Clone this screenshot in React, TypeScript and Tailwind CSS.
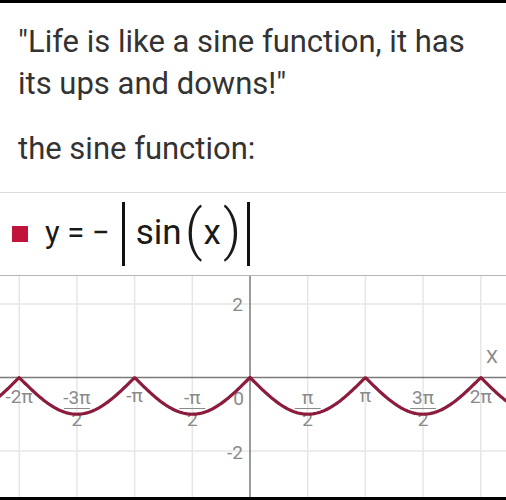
import React from "react";

const FONT = { fontFamily: "Roboto, 'Noto Sans', sans-serif" };

// graph geometry: 1 unit = UNIT px, origin at (OX, OY) inside the svg
const UNIT = 36.73;
const OX = 250;
const OY = 101.5;
const W = 506;
const H = 221;

function curvePath() {
  const pts: string[] = [];
  for (let px = -2; px <= W + 2; px += 1) {
    const x = (px - OX) / UNIT;
    const y = OY + Math.abs(Math.sin(x)) * UNIT;
    pts.push(`${px === -2 ? "M" : "L"}${px.toFixed(1)},${y.toFixed(2)}`);
  }
  return pts.join(" ");
}

function Fraction({ x, num }: { x: number; num: string }) {
  return (
    <g fill="#8a8a8a" fontSize="19" textAnchor="middle">
      <text x={x} y={OY + 26}>{num}</text>
      <line x1={x - 13} x2={x + 13} y1={OY + 31} y2={OY + 31} stroke="#8a8a8a" strokeWidth="1" />
      <text x={x} y={OY + 48}>2</text>
    </g>
  );
}

function Graph() {
  const step = (Math.PI / 2) * UNIT;
  const vlines = [-4, -3, -2, -1, 1, 2, 3, 4].map((k) => OX + k * step);
  const hlines = [OY - 2 * UNIT, OY + 2 * UNIT];
  return (
    <svg width={W} height={H} viewBox={`0 0 ${W} ${H}`} className="block" style={FONT}>
      {vlines.map((x) => (
        <line key={x} x1={x} x2={x} y1={0} y2={H} stroke="#e6e6e6" strokeWidth="1.5" />
      ))}
      {hlines.map((y) => (
        <line key={y} x1={0} x2={W} y1={y} y2={y} stroke="#e6e6e6" strokeWidth="1.5" />
      ))}
      <line x1={0} x2={W} y1={OY} y2={OY} stroke="#7a7a7a" strokeWidth="1.5" />
      <line x1={OX} x2={OX} y1={0} y2={H} stroke="#7a7a7a" strokeWidth="1.5" />

      <g fill="#8a8a8a" fontSize="19">
        <text x={OX - 7} y={OY - 2 * UNIT + 7} textAnchor="end">2</text>
        <text x={OX - 7} y={OY + 2 * UNIT + 8} textAnchor="end">-2</text>
        <text x={498} y={OY - 15} textAnchor="end">X</text>
        <text x={OX - 6} y={OY + 27} textAnchor="end">0</text>
        <text x={OX - 4 * step} y={OY + 25} textAnchor="middle">-2π</text>
        <text x={OX - 2 * step} y={OY + 24} textAnchor="middle">-π</text>
        <text x={OX + 2 * step} y={OY + 24} textAnchor="middle">π</text>
        <text x={OX + 4 * step} y={OY + 25} textAnchor="middle">2π</text>
      </g>
      <Fraction x={OX - 3 * step} num="-3π" />
      <Fraction x={OX - step} num="-π" />
      <Fraction x={OX + step} num="π" />
      <Fraction x={OX + 3 * step} num="3π" />

      <path d={curvePath()} fill="none" stroke="#8c1c3c" strokeWidth="3.2" strokeLinejoin="round" />
    </svg>
  );
}

function Equation() {
  return (
    <div className="flex h-[84px] items-center border-t border-b border-t-[#dcdcdc] border-b-[#b5b5b5] pl-3" style={FONT}>
      <div className="h-4 w-4 bg-[#c0143c]" />
      <div className="ml-[17px] flex items-center leading-none text-[#1a1a1a]">
        <span className="pb-1 text-[31px]">y = −</span>
        <span className="ml-[12px] h-[64px] w-[3px] bg-[#111]" />
        <span className="ml-[11px] pb-1 text-[35px]">sin</span>
        <span className="ml-[3px] pb-[9px] text-[56px] font-light">(</span>
        <span className="ml-[1px] pb-1 text-[35px]">x</span>
        <span className="ml-[2px] pb-[9px] text-[56px] font-light">)</span>
        <span className="ml-[6px] h-[64px] w-[3px] bg-[#111]" />
      </div>
    </div>
  );
}

export default function App() {
  return (
    <div className="flex h-[500px] w-[506px] flex-col bg-white">
      <div className="h-[3px] bg-black" />
      <div className="h-[189px] pl-[18px] pr-3 pt-[18px] text-[31px] leading-[42px] text-[#333]" style={FONT}>
        <p>"Life is like a sine function, it has its ups and downs!"</p>
        <p className="mt-[23px]">the sine function:</p>
      </div>
      <Equation />
      <Graph />
      <div className="h-[3px] bg-black" />
    </div>
  );
}
